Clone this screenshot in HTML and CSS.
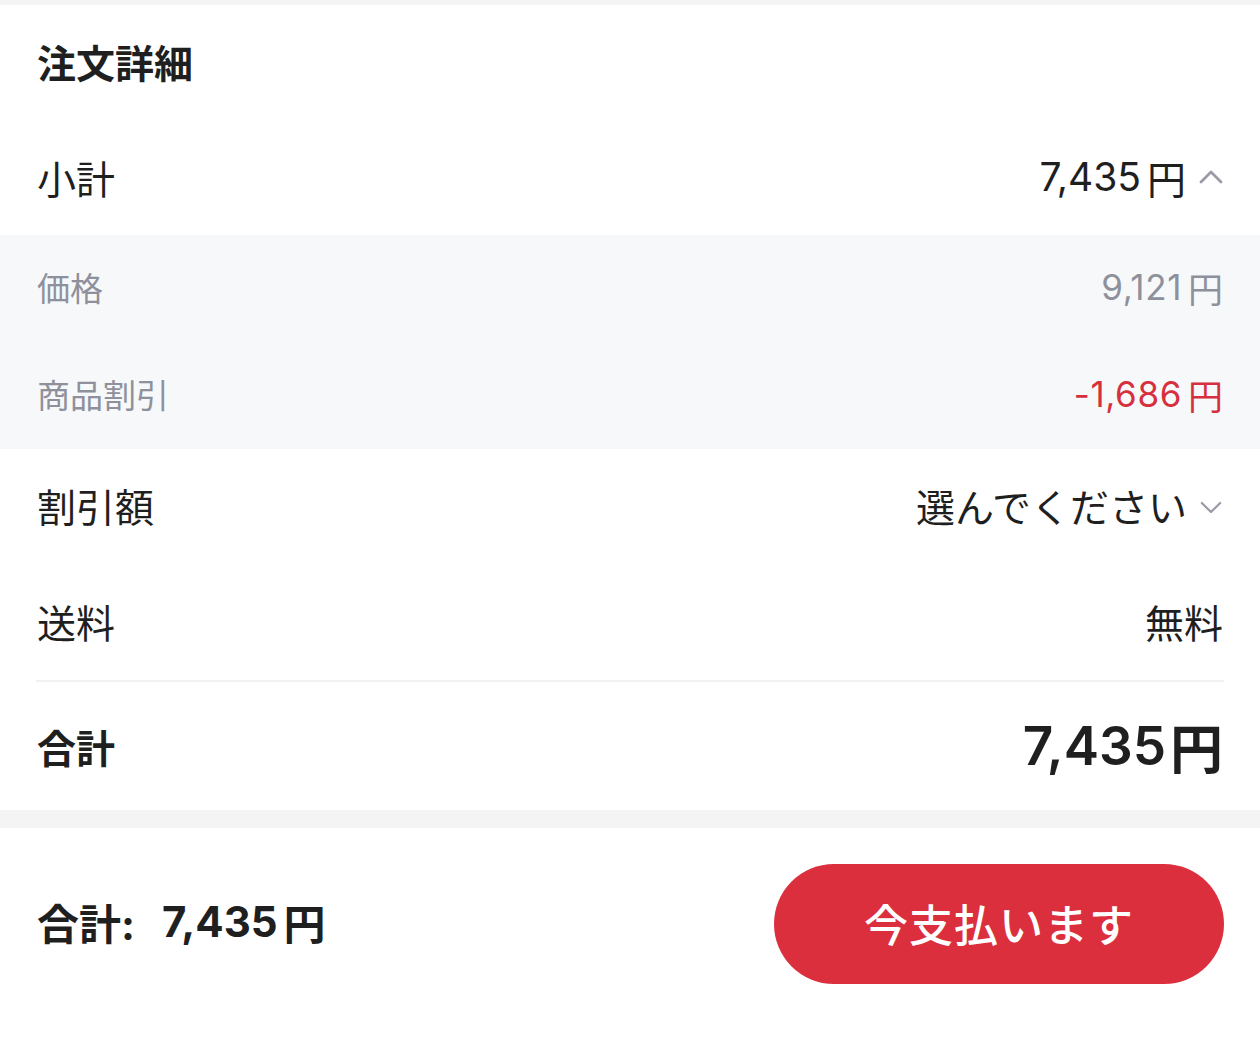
FILE: index.html
```html
<!DOCTYPE html>
<html lang="ja">
<head>
<meta charset="utf-8">
<link rel="stylesheet" href="styles.css">
</head>
<body>
<div class="page">
  <section class="card">
    <h2 class="title">注文詳細</h2>
    <div class="row row-sub">
      <span class="label">小計</span>
      <span class="value">7,435<span class="yen">円</span><svg class="chev" viewBox="0 0 24 14" width="24" height="14"><path d="M2 12 L12 2 L22 12" fill="none" stroke="#9b9ba8" stroke-width="2.8" stroke-linecap="round" stroke-linejoin="round"/></svg></span>
    </div>
    <div class="detail">
      <div class="row row-detail">
        <span class="label muted">価格</span>
        <span class="value muted num">9,121<span class="yen">円</span></span>
      </div>
      <div class="row row-detail">
        <span class="label muted">商品割引</span>
        <span class="value red num">-1,686<span class="yen">円</span></span>
      </div>
    </div>
    <div class="row row-coupon">
      <span class="label">割引額</span>
      <span class="value">選んでください<svg class="chev chev-down" viewBox="0 0 24 14" width="22" height="13"><path d="M2 2 L12 12 L22 2" fill="none" stroke="#9b9ba8" stroke-width="2.4" stroke-linecap="round" stroke-linejoin="round"/></svg></span>
    </div>
    <div class="row row-ship">
      <span class="label">送料</span>
      <span class="value">無料</span>
    </div>
    <div class="divider"></div>
    <div class="row row-total">
      <span class="label bold">合計</span>
      <span class="value total">7,435<span class="yen">円</span></span>
    </div>
  </section>
  <footer class="footer">
    <div class="footer-total"><span class="ft-label">合計:</span><span>7,435</span><span class="yen">円</span></div>
    <button class="pay">今支払います</button>
  </footer>
</div>
</body>
</html>
```
FILE: styles.css
```css
html, body {
  margin: 0;
  padding: 0;
}
body {
  background: #f4f4f4;
  font-family: Inter, "Noto Sans CJK JP", sans-serif;
  color: #1f1f1f;
  width: 1260px;
  height: 1044px;
  overflow: hidden;
}
.page {
  padding-top: 5px;
  display: flex;
  flex-direction: column;
  gap: 18px;
}
.card {
  background: #ffffff;
  display: flex;
  flex-direction: column;
}
.title {
  margin: 0;
  height: 118px;
  display: flex;
  align-items: center;
  padding: 0 37px 7px 37px;
  font-size: 39px;
  font-weight: 700;
  box-sizing: border-box;
}
.row {
  display: flex;
  justify-content: space-between;
  align-items: center;
  padding: 0 37px 5px 37px;
  font-size: 39px;
  box-sizing: border-box;
}
.row-sub { height: 112px; }
.detail {
  background: #f7f8fa;
}
.row-detail {
  height: 107px;
  font-size: 33px;
  padding-bottom: 3px;
}
.row-detail .num {
  font-size: 35px;
  letter-spacing: 0.6px;
}
.row-coupon { height: 117px; }
.row-ship { height: 114px; }
.row-total { height: 128px; padding-bottom: 0; }
.value {
  display: flex;
  align-items: center;
  gap: 13px;
}
.yen {
  margin-left: -7px;
  letter-spacing: 0;
}
.chev {
  display: block;
  margin-top: 0;
}
.chev-down {
  margin-top: 4px;
  margin-right: 1px;
}
.muted { color: #8e919b; }
.red { color: #d6303f; }
.bold { font-weight: 700; }
.total {
  font-size: 53px;
  font-weight: 600;
}
.total .yen { margin-left: -9px; }
.divider {
  height: 2px;
  background: #f1f1f1;
  margin: 0 36px;
}
.footer {
  background: #ffffff;
  height: 216px;
  display: flex;
  justify-content: space-between;
  align-items: flex-start;
  padding: 36px 36px 0 37px;
  box-sizing: border-box;
}
.footer-total {
  height: 120px;
  display: flex;
  align-items: center;
  padding-bottom: 5px;
  box-sizing: border-box;
  font-size: 42px;
  font-weight: 700;
  gap: 13px;
}
.ft-label {
  margin-right: 14px;
}
.footer-total .yen { margin-left: -7px; }
.pay {
  width: 450px;
  height: 120px;
  border: none;
  border-radius: 60px;
  background: #dc2f3e;
  color: #ffffff;
  font-family: Inter, "Noto Sans CJK JP", sans-serif;
  font-size: 44px;
  font-weight: 500;
  letter-spacing: 1px;
  padding: 0 0 2px 0;
}
```
